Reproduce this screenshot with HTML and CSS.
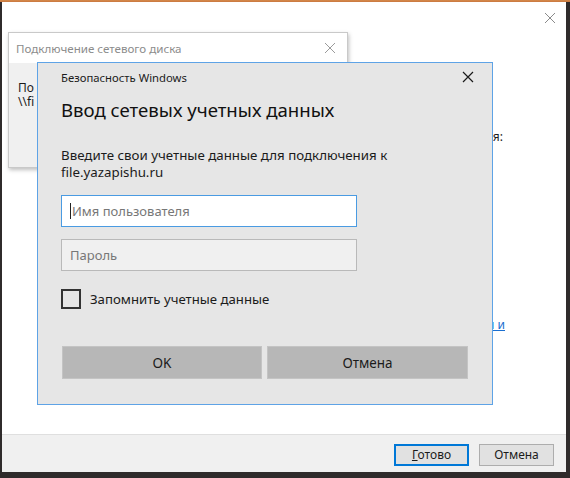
FILE: index.html
```html
<!DOCTYPE html>
<html lang="ru">
<head>
<meta charset="utf-8">
<title>Безопасность Windows</title>
<link rel="stylesheet" href="styles.css">
</head>
<body>
<div class="window">
  <button class="win-close" aria-label="Закрыть">
    <svg width="12" height="12" viewBox="0 0 12 12"><path d="M1 1L11 11M11 1L1 11" stroke="#8a8a8a" stroke-width="1" fill="none"/></svg>
  </button>
  <div class="main">
    <div class="main-line first"><span>подключиться:</span></div>
    <div class="main-line link"><a href="#">документы и</a></div>
  </div>
  <div class="footer">
    <button class="btn focused"><u>Г</u>отово</button>
    <button class="btn">Отмена</button>
  </div>

  <div class="bg-dialog">
    <div class="bg-title">
      <span>Подключение сетевого диска</span>
      <svg width="12" height="12" viewBox="0 0 12 12"><path d="M1 1L11 11M11 1L1 11" stroke="#9a9a9a" stroke-width="1" fill="none"/></svg>
    </div>
    <div class="bg-body">
      <div>По</div>
      <div>\\fi</div>
    </div>
  </div>

  <div class="dialog">
    <div class="dlg-head">
      <span class="dlg-caption">Безопасность Windows</span>
      <svg class="dlg-x" width="12" height="12" viewBox="0 0 12 12"><path d="M1 1L11 11M11 1L1 11" stroke="#1a1a1a" stroke-width="1.2" fill="none"/></svg>
    </div>
    <h1 class="dlg-title">Ввод сетевых учетных данных</h1>
    <p class="dlg-desc">Введите свои учетные данные для подключения к<br>file.yazapishu.ru</p>
    <div class="field active"><span class="caret"></span><span class="ph">Имя пользователя</span></div>
    <div class="field"><span class="ph">Пароль</span></div>
    <label class="remember"><span class="box"></span><span>Запомнить учетные данные</span></label>
    <div class="actions">
      <button class="big-btn">OK</button>
      <button class="big-btn">Отмена</button>
    </div>
  </div>
</div>
</body>
</html>
```
FILE: styles.css
```css
html, body {
  margin: 0;
  padding: 0;
}
body {
  width: 570px;
  height: 478px;
  overflow: hidden;
  background: linear-gradient(to bottom, #d58a4c 0, #c9773f 2px, #2f2b2b 2px);
  font-family: "Noto Sans", "Open Sans", sans-serif;
  color: #1b1b1b;
}
.window {
  position: relative;
  margin: 2px 0 0 2px;
  width: 564px;
  height: 470px;
  background: #ffffff;
  display: flex;
  flex-direction: column;
}
.win-close {
  position: absolute;
  right: 10px;
  top: 10px;
  border: 0;
  background: none;
  padding: 0;
  width: 12px;
  height: 12px;
  display: block;
}
.win-close svg { display: block; }
.main {
  flex: 1;
  display: flex;
  flex-direction: column;
  align-items: flex-start;
}
.main-line {
  width: 501px;
  display: flex;
  justify-content: flex-end;
  white-space: nowrap;
  font-size: 12px;
  line-height: 16px;
  color: #1b1b1b;
}
.main-line.first {
  margin-top: 127px;
}
.main-line.link {
  margin-top: 172px;
  width: 503px;
}
.main-line.link a {
  color: #1a6fd0;
  text-decoration: underline;
}
.footer {
  height: 38px;
  border-top: 1px solid #dfdfdf;
  background: #f0f0f0;
  display: flex;
  justify-content: flex-end;
  align-items: flex-start;
  gap: 10px;
  padding: 9px 12px 0 0;
  box-sizing: border-box;
}
.btn {
  width: 75px;
  height: 22px;
  font-family: inherit;
  font-size: 12px;
  color: #1b1b1b;
  background: #e1e1e1;
  border: 1px solid #adadad;
  padding: 0;
  line-height: 18px;
}
.btn.focused {
  border: 2px solid #0078d7;
}
.btn u { text-decoration: underline; }

/* background dialog */
.bg-dialog {
  position: absolute;
  left: 6px;
  top: 30px;
  width: 340px;
  height: 136px;
  background: #f0f0f0;
  border: 1px solid #c9c9c9;
  box-sizing: border-box;
  box-shadow: 1px 2px 4px rgba(0,0,0,0.25);
  display: flex;
  flex-direction: column;
}
.bg-title {
  height: 30px;
  background: #ffffff;
  display: flex;
  align-items: center;
  justify-content: space-between;
  padding: 0 11px 0 7px;
  font-size: 11.6px;
  color: #8c8c8c;
}
.bg-title svg { display: block; }
.bg-body {
  padding: 18px 0 0 9px;
  font-size: 12px;
  line-height: 14px;
  color: #1b1b1b;
  white-space: nowrap;
}

/* security dialog */
.dialog {
  position: absolute;
  left: 35px;
  top: 60px;
  width: 456px;
  height: 343px;
  box-sizing: border-box;
  background: #e6e6e6;
  border: 1px solid #5ea3e6;
  padding: 0 24px 0 23px;
  display: flex;
  flex-direction: column;
}
.dlg-head {
  height: 28px;
  display: flex;
  align-items: center;
  justify-content: space-between;
  margin-right: -6px;
}
.dlg-caption {
  font-size: 11.3px;
  color: #1b1b1b;
}
.dlg-x { display: block; }
.dlg-title {
  margin: 5px 0 0 0;
  font-size: 18.6px;
  font-weight: 400;
  line-height: 28px;
  color: #111;
}
.dlg-desc {
  margin: 23px 0 0 0;
  font-size: 13.3px;
  line-height: 17px;
  color: #1b1b1b;
}
.field {
  margin-top: 14px;
  width: 296px;
  height: 32px;
  box-sizing: border-box;
  border: 1px solid #b9b9b9;
  background: #f0f0f0;
  display: flex;
  align-items: center;
  padding-left: 8px;
  position: relative;
}
.field + .field { margin-top: 12px; }
.field.active {
  background: #ffffff;
  border-color: #4a9be2;
}
.caret {
  width: 1px;
  height: 16px;
  background: #222;
  margin-right: 1px;
}
.ph {
  font-size: 13px;
  color: #777;
}
.remember {
  margin-top: 18px;
  display: flex;
  align-items: center;
  gap: 9px;
  font-size: 13.2px;
  color: #1b1b1b;
}
.box {
  width: 20px;
  height: 20px;
  box-sizing: border-box;
  border: 2px solid #333;
  background: #e6e6e6;
}
.actions {
  margin-top: 37px;
  display: grid;
  grid-template-columns: 200px 201px;
  gap: 5px;
  padding-left: 1px;
}
.big-btn {
  height: 33px;
  background: #b7b7b7;
  border: 1px solid #c4c4c4;
  font-family: inherit;
  font-size: 13.5px;
  color: #1b1b1b;
  padding: 0;
}
```
